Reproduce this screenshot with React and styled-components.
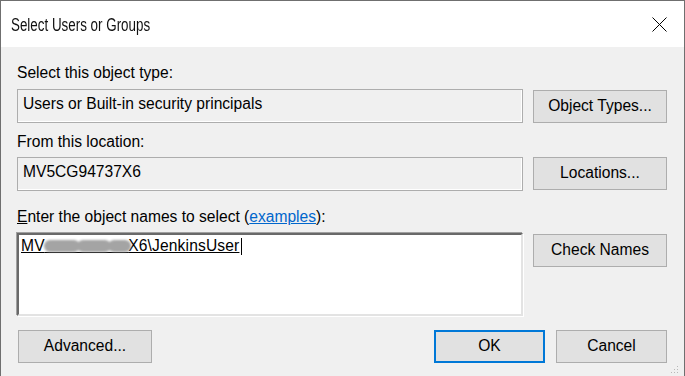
import React from "react";
import styled, { createGlobalStyle } from "styled-components";

const Global = createGlobalStyle`
  html, body { margin: 0; padding: 0; background: #f0f0f0; }
  body { font-family: "Liberation Sans", Arial, sans-serif; }
  * { box-sizing: border-box; }
`;

const Window = styled.div`
  position: relative;
  width: 685px;
  height: 376px;
  overflow: hidden;
  background: #f0f0f0;
  border: 1px solid #6f6f6f;
  border-bottom: none;
  display: flex;
  flex-direction: column;
  font-family: "Liberation Sans", Arial, sans-serif;
  font-size: 15.6px;
  color: #000;
`;

const TitleBar = styled.div`
  height: 46px;
  flex: none;
  background: #fff;
  display: flex;
  align-items: center;
  justify-content: space-between;
  padding: 2px 17px 0 10px;
`;

const Title = styled.div`
  font-family: "Liberation Sans", Arial, sans-serif;
  font-size: 17.5px;
  color: #111;
  transform: scaleX(0.765);
  transform-origin: left center;
  white-space: nowrap;
`;

const CloseBox = styled.svg`
  width: 15px;
  height: 15px;
  display: block;
  margin-top: -1px;
`;

const Body = styled.div`
  padding: 17px 17px 0 16px;
  display: flex;
  flex-direction: column;
`;

const Section = styled.div`
  display: grid;
  grid-template-columns: 506px 134px;
  column-gap: 10px;
  row-gap: ${(p) => p.$gap}px;
  margin-top: ${(p) => p.$top}px;
`;

const Label = styled.div`
  grid-column: 1;
  line-height: 18px;
  white-space: nowrap;
`;

const Field = styled.div`
  grid-column: 1;
  height: 34px;
  border: 1px solid #adadad;
  box-shadow: inset -1px -1px 0 #ffffff;
  background: #f0f0f0;
  padding: 5px 5px 4px;
  line-height: 18px;
  white-space: nowrap;
`;

const NamesBox = styled.div`
  grid-column: 1;
  height: 83px;
  background: #fff;
  border-style: solid;
  border-width: 2px;
  border-color: #696969 #e3e3e3 #e3e3e3 #696969;
  box-shadow: -1px -1px 0 #a0a0a0, 1px 1px 0 #ffffff;
  padding: 2px 2px;
  line-height: 18px;
  white-space: nowrap;
`;

const Button = styled.button`
  grid-column: 2;
  align-self: start;
  margin-top: ${(p) => p.$offset || 0}px;
  width: ${(p) => p.$w || 134}px;
  height: 33px;
  padding: 0;
  background: #e1e1e1;
  border: ${(p) => (p.$default ? "2px solid #0078d7" : "1px solid #adadad")};
  font-family: "Liberation Sans", Arial, sans-serif;
  font-size: 15.6px;
  color: #000;
  display: flex;
  align-items: center;
  justify-content: center;
  padding-bottom: 1px;
`;

const Link = styled.span`
  color: #0066cc;
  text-decoration: underline;
`;

const Resolved = styled.span`
  text-decoration: underline;
  text-decoration-color: #000;
  text-underline-offset: 1px;
  letter-spacing: 0.15px;
`;

const Redacted = styled.span`
  position: relative;
  color: transparent;
  letter-spacing: 1px;
`;

const Smudge = styled.span`
  position: absolute;
  left: -1px;
  right: 0;
  top: 3px;
  height: 12px;
  display: flex;
  filter: blur(1px);
`;

const Blob = styled.span`
  flex: ${(p) => p.$grow};
  background: #a4a4a4;
  border-radius: 6px;
  margin-right: -3px;
`;

const Caret = styled.span`
  display: inline-block;
  width: 1px;
  height: 17px;
  background: #000;
  margin-left: 2px;
  vertical-align: -4px;
`;

const Footer = styled.div`
  margin-top: 14px;
  display: flex;
  justify-content: space-between;
  padding-left: 1px;
`;

const ButtonGroup = styled.div`
  display: flex;
  gap: 11px;
`;

const Grip = styled.svg`
  position: absolute;
  right: 5px;
  bottom: 2px;
  width: 8px;
  height: 8px;
`;

export default function App() {
  return (
    <>
      <Global />
      <Window>
        <TitleBar>
          <Title>Select Users or Groups</Title>
          <CloseBox viewBox="0 0 15 15">
            <path d="M0.5 0.5 L14.5 14.5 M14.5 0.5 L0.5 14.5" stroke="#000" strokeWidth="1" fill="none" />
          </CloseBox>
        </TitleBar>
        <Body>
          <Section $gap={7} $top={0}>
            <Label>Select this object type:</Label>
            <Field>Users or Built-in security principals</Field>
            <Button $offset={1}>Object Types...</Button>
          </Section>
          <Section $gap={6} $top={10}>
            <Label>From this location:</Label>
            <Field>MV5CG94737X6</Field>
            <Button>Locations...</Button>
          </Section>
          <Section $gap={7} $top={17}>
            <Label>
              <u>E</u>nter the object names to select (<Link>examples</Link>):
            </Label>
            <NamesBox>
              <Resolved>
                MV
                <Redacted>
                  5CG94737
                  <Smudge>
                    <Blob $grow={34} />
                    <Blob $grow={31} />
                    <Blob $grow={22} />
                  </Smudge>
                </Redacted>
                X6\JenkinsUser
              </Resolved>
              <Caret />
            </NamesBox>
            <Button $offset={1}>Check Names</Button>
          </Section>
          <Footer>
            <Button $w={134}>Advanced...</Button>
            <ButtonGroup>
              <Button $w={111} $default>OK</Button>
              <Button $w={111}>Cancel</Button>
            </ButtonGroup>
          </Footer>
        </Body>
        <Grip viewBox="0 0 8 8">
          <rect x="6" y="0" width="1" height="1" fill="#b8b8b8" />
          <rect x="3" y="3" width="1" height="1" fill="#b8b8b8" />
          <rect x="6" y="3" width="1" height="1" fill="#b8b8b8" />
          <rect x="0" y="6" width="1" height="1" fill="#b8b8b8" />
          <rect x="3" y="6" width="1" height="1" fill="#b8b8b8" />
          <rect x="6" y="6" width="1" height="1" fill="#b8b8b8" />
        </Grip>
      </Window>
    </>
  );
}
